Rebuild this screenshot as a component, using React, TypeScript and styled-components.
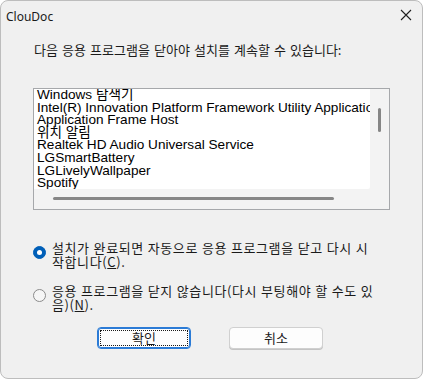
import styled, { createGlobalStyle } from "styled-components";

const GlobalStyle = createGlobalStyle`
  html, body {
    margin: 0;
    padding: 0;
    background: #ffffff;
  }
  body {
    font-family: "Noto Sans CJK KR", "Noto Sans", sans-serif;
    color: #1a1a1a;
  }
`;

const Window = styled.div`
  box-sizing: border-box;
  width: 423px;
  height: 379px;
  display: flex;
  flex-direction: column;
  background: #f0f0f0;
  border: 1px solid #bdbdbd;
  border-radius: 8px;
  overflow: hidden;
`;

const TitleBar = styled.div`
  height: 30px;
  display: flex;
  align-items: center;
  justify-content: space-between;
  padding: 0 10px 0 5px;
`;

const Title = styled.span`
  font-family: "Noto Sans", "Liberation Sans", sans-serif;
  font-size: 12px;
  color: #1a1a1a;
`;

const CloseButton = styled.span`
  display: flex;
  width: 12px;
  height: 12px;
  margin-bottom: 3px;
`;

const Content = styled.div`
  display: flex;
  flex-direction: column;
  padding: 0 0 0 32px;
`;

const Heading = styled.div`
  margin: 11px 0 0 1px;
  font-size: 13px;
  line-height: 16px;
  word-spacing: 1.2px;
`;

const ListBox = styled.div`
  box-sizing: border-box;
  width: 357px;
  height: 122px;
  margin-top: 30px;
  border: 1px solid #a6a8ab;
  display: grid;
  grid-template-columns: 336px 1fr;
  grid-template-rows: 100px 1fr;
  background: #f3f3f3;
`;

const ListItems = styled.div`
  background: #ffffff;
  overflow: hidden;
  padding-left: 3px;
  border-bottom-right-radius: 2px;
`;

const Item = styled.div`
  height: 12.6px;
  line-height: 12.6px;
  font-family: "Liberation Sans", "Noto Sans CJK KR", sans-serif;
  font-size: 13.6px;
  white-space: nowrap;
  color: #000000;
`;

const VScroll = styled.div`
  display: flex;
  justify-content: center;
  padding-top: 19px;
`;

const VThumb = styled.div`
  width: 3px;
  height: 24px;
  border-radius: 2px;
  background: #868686;
`;

const HScroll = styled.div`
  display: flex;
  align-items: flex-start;
  padding: 8px 0 0 19px;
`;

const HThumb = styled.div`
  width: 281px;
  height: 2.5px;
  border-radius: 2px;
  background: #868686;
`;

const RadioGroup = styled.div`
  display: flex;
  flex-direction: column;
  gap: 16px;
  margin-top: 31px;
`;

const RadioRow = styled.label`
  display: flex;
  align-items: flex-start;
  gap: 6px;
`;

const RadioMark = styled.span<{ $checked: boolean }>`
  box-sizing: border-box;
  flex: none;
  width: 13px;
  height: 13px;
  margin-top: 4.5px;
  border-radius: 50%;
  display: flex;
  align-items: center;
  justify-content: center;
  background: ${(p) => (p.$checked ? "#005fb8" : "#f6f6f6")};
  border: 1px solid ${(p) => (p.$checked ? "#005fb8" : "#8b8b8b")};

  &::after {
    content: "";
    display: ${(p) => (p.$checked ? "block" : "none")};
    width: 5px;
    height: 5px;
    border-radius: 50%;
    background: #ffffff;
  }
`;

const RadioText = styled.span`
  font-size: 13px;
  line-height: 13.5px;
  letter-spacing: 0.6px;
  word-spacing: 0.4px;
  white-space: nowrap;
`;

const ButtonRow = styled.div`
  display: flex;
  gap: 38px;
  margin: 16px 0 0 64px;
`;

const Button = styled.button<{ $focused?: boolean }>`
  position: relative;
  box-sizing: border-box;
  width: 94px;
  height: 22px;
  padding: 0;
  font-family: "Noto Sans CJK KR", sans-serif;
  font-size: 13px;
  line-height: 20px;
  color: #1a1a1a;
  background: #fdfdfd;
  border-radius: 4px;
  border: 1px solid ${(p) => (p.$focused ? "#2b7bd6" : "#d0d0d0")};
  box-shadow: ${(p) => (p.$focused ? "inset 0 0 0 1px #2b7bd6" : "0 1px 0 #c4c4c4")};

  &::after {
    content: "";
    display: ${(p) => (p.$focused ? "block" : "none")};
    position: absolute;
    inset: 2px;
    border: 1px dotted #1a1a1a;
  }
`;

const apps = [
  "Windows 탐색기",
  "Intel(R) Innovation Platform Framework Utility Application",
  "Application Frame Host",
  "위치 알림",
  "Realtek HD Audio Universal Service",
  "LGSmartBattery",
  "LGLivelyWallpaper",
  "Spotify",
];

const App = () => {
  return (
    <>
      <GlobalStyle />
      <Window>
        <TitleBar>
          <Title>ClouDoc</Title>
          <CloseButton>
            <svg width="12" height="12" viewBox="0 0 12 12">
              <path d="M1 1 L11 11 M11 1 L1 11" stroke="#1f1f1f" strokeWidth="1.1" fill="none" />
            </svg>
          </CloseButton>
        </TitleBar>
        <Content>
          <Heading>다음 응용 프로그램을 닫아야 설치를 계속할 수 있습니다:</Heading>
          <ListBox>
            <ListItems>
              {apps.map((name) => (
                <Item key={name}>{name}</Item>
              ))}
            </ListItems>
            <VScroll>
              <VThumb />
            </VScroll>
            <HScroll>
              <HThumb />
            </HScroll>
            <div />
          </ListBox>
          <RadioGroup>
            <RadioRow>
              <RadioMark $checked={true} />
              <RadioText>
                설치가 완료되면 자동으로 응용 프로그램을 닫고 다시 시
                <br />
                작합니다(<u>C</u>).
              </RadioText>
            </RadioRow>
            <RadioRow>
              <RadioMark $checked={false} />
              <RadioText>
                응용 프로그램을 닫지 않습니다(다시 부팅해야 할 수도 있
                <br />
                음)(<u>N</u>).
              </RadioText>
            </RadioRow>
          </RadioGroup>
          <ButtonRow>
            <Button $focused>확인</Button>
            <Button>취소</Button>
          </ButtonRow>
        </Content>
      </Window>
    </>
  );
};

export default App;
